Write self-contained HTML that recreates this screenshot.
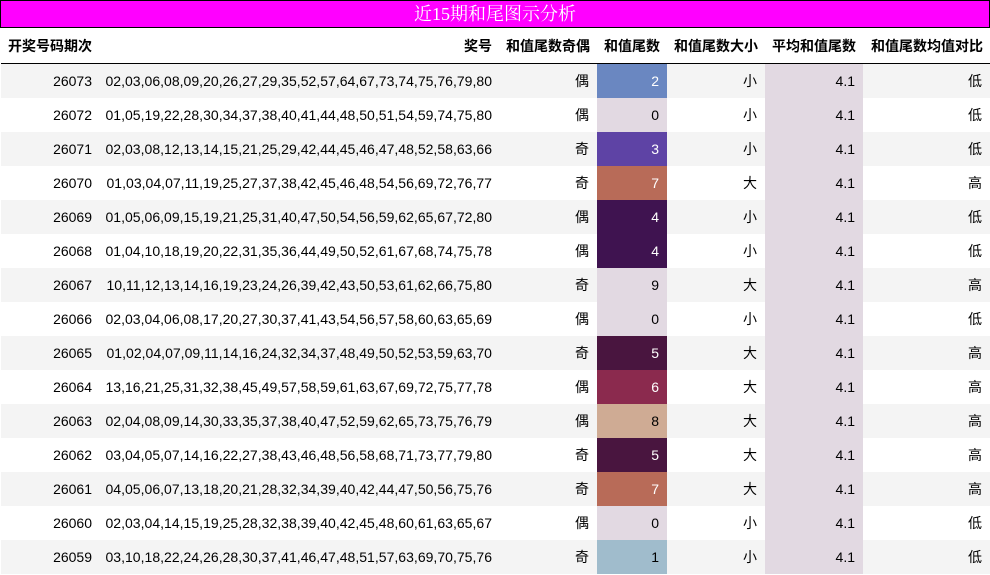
<!DOCTYPE html><html><head><meta charset="utf-8"><style>
body{margin:0;width:990px;height:575px;overflow:hidden;background:#fff;font-family:"Liberation Sans","Noto Sans CJK SC",sans-serif;font-size:14px;color:#000}
.t{position:absolute;left:0;top:0;width:988px;height:26px;background:#ff00ff;border:1px solid #000;color:#fff;text-align:center;font:18px/26px "Liberation Serif","Noto Serif CJK SC",serif}
table{position:absolute;left:1px;top:28px;border-collapse:collapse;table-layout:fixed;width:989px}
td,th{padding:0 8px 0 0;text-align:right;white-space:nowrap;height:34px}
td:nth-child(2){padding-right:6px;letter-spacing:0.02px}
th{height:35px;font-weight:bold;border-bottom:1px solid #000;padding-right:7px}
th:nth-child(2){padding-right:6px}
th:first-child{text-align:left;padding-left:7px}
tr:nth-child(even) td{background:#f4f4f4}
td.a{background:#e2d9e2!important}
td.c{color:#fff}
</style></head><body>
<div class="t">近15期和尾图示分析</div>
<table>
<colgroup><col style="width:99px"><col style="width:398px"><col style="width:99px"><col style="width:70px"><col style="width:98px"><col style="width:98px"><col style="width:127px"></colgroup>
<tr><th>开奖号码期次</th><th>奖号</th><th>和值尾数奇偶</th><th>和值尾数</th><th>和值尾数大小</th><th>平均和值尾数</th><th>和值尾数均值对比</th></tr>
<tr><td>26073</td><td>02,03,06,08,09,20,26,27,29,35,52,57,64,67,73,74,75,76,79,80</td><td>偶</td><td class="c" style="background:#6a87c1!important">2</td><td>小</td><td class="a">4.1</td><td>低</td></tr>
<tr><td>26072</td><td>01,05,19,22,28,30,34,37,38,40,41,44,48,50,51,54,59,74,75,80</td><td>偶</td><td class="a">0</td><td>小</td><td class="a">4.1</td><td>低</td></tr>
<tr><td>26071</td><td>02,03,08,12,13,14,15,21,25,29,42,44,45,46,47,48,52,58,63,66</td><td>奇</td><td class="c" style="background:#5e43a5!important">3</td><td>小</td><td class="a">4.1</td><td>低</td></tr>
<tr><td>26070</td><td>01,03,04,07,11,19,25,27,37,38,42,45,46,48,54,56,69,72,76,77</td><td>奇</td><td class="c" style="background:#b86b58!important">7</td><td>大</td><td class="a">4.1</td><td>高</td></tr>
<tr><td>26069</td><td>01,05,06,09,15,19,21,25,31,40,47,50,54,56,59,62,65,67,72,80</td><td>偶</td><td class="c" style="background:#3f1350!important">4</td><td>小</td><td class="a">4.1</td><td>低</td></tr>
<tr><td>26068</td><td>01,04,10,18,19,20,22,31,35,36,44,49,50,52,61,67,68,74,75,78</td><td>偶</td><td class="c" style="background:#3f1350!important">4</td><td>小</td><td class="a">4.1</td><td>低</td></tr>
<tr><td>26067</td><td>10,11,12,13,14,16,19,23,24,26,39,42,43,50,53,61,62,66,75,80</td><td>奇</td><td class="a">9</td><td>大</td><td class="a">4.1</td><td>高</td></tr>
<tr><td>26066</td><td>02,03,04,06,08,17,20,27,30,37,41,43,54,56,57,58,60,63,65,69</td><td>偶</td><td class="a">0</td><td>小</td><td class="a">4.1</td><td>低</td></tr>
<tr><td>26065</td><td>01,02,04,07,09,11,14,16,24,32,34,37,48,49,50,52,53,59,63,70</td><td>奇</td><td class="c" style="background:#49153f!important">5</td><td>大</td><td class="a">4.1</td><td>高</td></tr>
<tr><td>26064</td><td>13,16,21,25,31,32,38,45,49,57,58,59,61,63,67,69,72,75,77,78</td><td>偶</td><td class="c" style="background:#8b2a4e!important">6</td><td>大</td><td class="a">4.1</td><td>高</td></tr>
<tr><td>26063</td><td>02,04,08,09,14,30,33,35,37,38,40,47,52,59,62,65,73,75,76,79</td><td>偶</td><td style="background:#cfab94!important">8</td><td>大</td><td class="a">4.1</td><td>高</td></tr>
<tr><td>26062</td><td>03,04,05,07,14,16,22,27,38,43,46,48,56,58,68,71,73,77,79,80</td><td>奇</td><td class="c" style="background:#49153f!important">5</td><td>大</td><td class="a">4.1</td><td>高</td></tr>
<tr><td>26061</td><td>04,05,06,07,13,18,20,21,28,32,34,39,40,42,44,47,50,56,75,76</td><td>奇</td><td class="c" style="background:#b86b58!important">7</td><td>大</td><td class="a">4.1</td><td>高</td></tr>
<tr><td>26060</td><td>02,03,04,14,15,19,25,28,32,38,39,40,42,45,48,60,61,63,65,67</td><td>偶</td><td class="a">0</td><td>小</td><td class="a">4.1</td><td>低</td></tr>
<tr><td>26059</td><td>03,10,18,22,24,26,28,30,37,41,46,47,48,51,57,63,69,70,75,76</td><td>奇</td><td style="background:#a0bccc!important">1</td><td>小</td><td class="a">4.1</td><td>低</td></tr>
</table>
</body></html>
